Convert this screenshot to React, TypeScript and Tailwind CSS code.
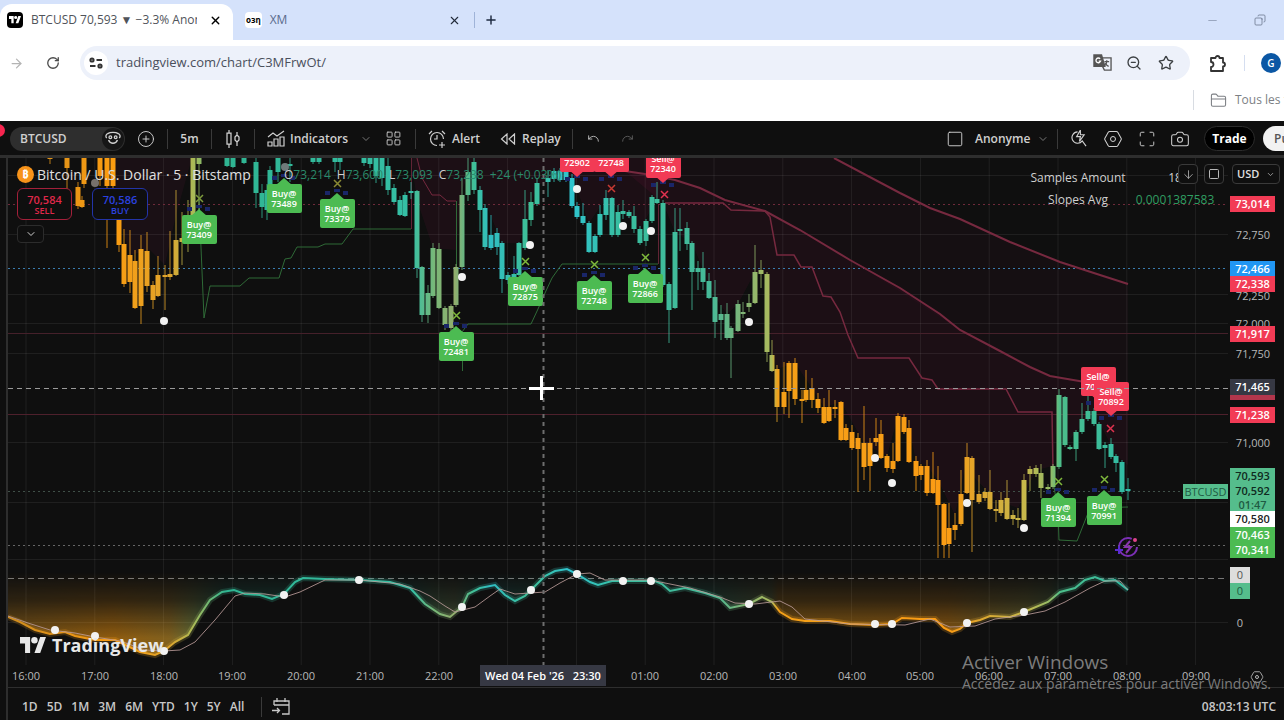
import type { ReactNode } from "react";
import {
  ArrowDown,
  ArrowRight,
  Camera,
  ChevronDown,
  CirclePlus,
  Copy,
  FolderClosed,
  Hexagon,
  LayoutGrid,
  Maximize,
  Minus,
  Plus,
  Redo,
  RotateCw,
  Square,
  Star,
  Undo,
  X,
  ZoomOut,
} from "lucide-react";

// The plot keeps window coordinates: its origin is the pane's top left corner
const ORIGIN_X = 8;
const ORIGIN_Y = 158;
const HOUR_WIDTH = 68.8;
const FIRST_HOUR_X = 26;

// x, high, body top, body bottom, low
type Candle = [number, number, number, number, number];

const candles: Candle[] = [
  [50, 158, 158, 159, 164], [67, 158, 158, 168, 192], [78, 182, 187, 206, 209], [82, 196, 200, 207, 208],
  [84, 158, 158, 184, 188], [100, 158, 158, 176, 186], [107, 158, 158, 186, 248], [113, 158, 158, 186, 190],
  [119, 215, 218, 245, 252], [124, 229, 244, 284, 287], [130, 230, 255, 282, 293], [135, 250, 261, 308, 309],
  [141, 235, 249, 306, 324], [147, 232, 251, 286, 292], [153, 281, 285, 300, 309], [158, 256, 275, 296, 297],
  [165, 265, 275, 277, 310], [170, 231, 274, 277, 280], [176, 190, 240, 275, 276], [182, 212, 238, 242, 265],
  [188, 200, 216, 228, 252], [193, 158, 158, 228, 240], [199, 158, 158, 164, 212], [227, 158, 158, 166, 167],
  [233, 158, 158, 167, 168], [244, 158, 158, 163, 164], [256, 158, 162, 193, 208], [262, 184, 193, 207, 218],
  [267, 184, 190, 210, 220], [270, 166, 170, 186, 190], [278, 158, 158, 172, 182], [290, 158, 164, 166, 182],
  [313, 158, 158, 162, 164], [319, 158, 158, 162, 164], [335, 158, 158, 162, 172], [340, 158, 158, 162, 170],
  [364, 158, 158, 163, 166], [370, 158, 158, 164, 168], [376, 158, 158, 176, 183], [382, 158, 158, 178, 186],
  [388, 158, 166, 190, 195], [394, 184, 188, 202, 204], [400, 196, 200, 215, 216], [405, 192, 195, 216, 217],
  [411, 182, 191, 193, 199], [417, 190, 191, 268, 278], [422, 266, 267, 315, 322], [428, 285, 293, 315, 323],
  [433, 243, 248, 296, 298], [439, 243, 249, 308, 309], [445, 306, 308, 325, 330], [451, 304, 306, 328, 332],
  [456, 264, 267, 305, 307], [462, 178, 195, 267, 270], [468, 158, 172, 195, 201], [474, 158, 162, 190, 194],
  [480, 186, 190, 210, 232], [485, 204, 208, 247, 250], [491, 215, 235, 248, 250], [497, 228, 233, 247, 255],
  [502, 241, 243, 279, 293], [508, 272, 275, 280, 284], [514, 256, 274, 281, 282], [519, 242, 243, 275, 276],
  [525, 190, 219, 248, 250], [531, 192, 202, 220, 226], [537, 178, 183, 204, 206], [548, 170, 178, 182, 197],
  [554, 168, 171, 179, 182], [560, 168, 171, 180, 182], [566, 168, 171, 180, 182], [572, 174, 178, 206, 208],
  [577, 202, 206, 217, 219], [583, 203, 216, 223, 225], [589, 221, 223, 252, 253], [595, 234, 236, 252, 253],
  [600, 205, 214, 235, 237], [606, 190, 198, 215, 220], [612, 197, 198, 235, 237], [618, 205, 212, 235, 237],
  [623, 200, 211, 214, 219], [629, 210, 212, 216, 218], [634, 206, 216, 229, 233], [640, 226, 229, 243, 245],
  [646, 219, 221, 241, 246], [652, 195, 197, 221, 223], [657, 182, 199, 203, 204], [663, 200, 203, 285, 287],
  [669, 282, 284, 310, 343], [675, 208, 232, 308, 309], [680, 208, 229, 231, 251], [687, 222, 228, 244, 250],
  [692, 241, 243, 272, 310], [698, 261, 268, 272, 290], [703, 252, 268, 282, 290], [709, 273, 281, 298, 299],
  [715, 280, 297, 322, 338], [721, 305, 314, 320, 340], [727, 303, 314, 338, 340], [731, 326, 328, 338, 378],
  [738, 300, 304, 331, 332], [743, 302, 312, 314, 318], [749, 294, 303, 307, 312], [755, 245, 272, 303, 304],
  [761, 260, 270, 274, 288], [767, 272, 274, 352, 362], [772, 340, 355, 371, 372], [777, 365, 369, 407, 422],
  [784, 362, 392, 407, 414], [789, 361, 363, 391, 418], [795, 358, 363, 399, 405], [802, 390, 399, 401, 423],
  [806, 370, 390, 400, 402], [812, 378, 388, 400, 408], [818, 393, 399, 408, 413], [824, 398, 407, 423, 424],
  [829, 390, 407, 421, 422], [835, 400, 407, 409, 418], [841, 401, 402, 440, 441], [846, 424, 428, 440, 441],
  [852, 425, 432, 448, 450], [858, 433, 438, 449, 492], [864, 406, 443, 467, 480], [870, 438, 443, 466, 491],
  [876, 418, 438, 442, 446], [881, 420, 434, 458, 459], [887, 454, 456, 468, 472], [893, 443, 461, 469, 473],
  [898, 413, 416, 461, 462], [904, 414, 417, 432, 434], [909, 420, 428, 462, 463], [916, 456, 461, 476, 491],
  [921, 464, 466, 475, 480], [927, 460, 466, 493, 496], [933, 452, 479, 493, 494], [938, 466, 480, 505, 558],
  [944, 503, 504, 545, 558], [949, 503, 528, 544, 558], [955, 513, 525, 530, 540], [961, 470, 494, 524, 526],
  [967, 443, 457, 493, 494], [972, 456, 458, 500, 552], [979, 475, 494, 502, 504], [985, 488, 492, 498, 501],
  [990, 470, 492, 509, 510], [996, 500, 509, 511, 522], [1001, 492, 500, 513, 516], [1007, 480, 498, 519, 520],
  [1013, 510, 515, 519, 525], [1018, 508, 518, 520, 528], [1024, 474, 480, 520, 521], [1030, 466, 469, 474, 491],
  [1036, 465, 468, 474, 477], [1041, 464, 473, 488, 498], [1048, 484, 487, 489, 492], [1053, 464, 466, 487, 489],
  [1059, 389, 395, 467, 469], [1065, 396, 397, 445, 447], [1070, 445, 447, 449, 450], [1076, 430, 432, 449, 461],
  [1082, 403, 419, 432, 434], [1088, 396, 411, 419, 421], [1094, 408, 411, 424, 426], [1099, 422, 424, 449, 450],
  [1105, 442, 445, 448, 468], [1111, 438, 444, 457, 459], [1116, 454, 456, 463, 472], [1122, 460, 462, 492, 494],
  [1128, 478, 489, 491, 500],
];

const slopeLine =
  "8,617 20,622 35,630 50,634 65,632 75,636 95,640 115,640 140,652 155,655 164,651 175,642 188,635 200,615 210,600 222,592 234,590 245,594 260,595 272,599 284,594 295,582 303,578 325,579 360,580 390,582 410,588 425,604 440,614 450,617 462,607 468,594 480,588 495,585 505,595 515,601 525,596 531,590 545,576 555,571 567,569 577,574 590,582 598,585 612,581 640,581 655,581 662,584 670,591 685,588 705,593 720,598 730,608 749,604 762,597 772,602 780,612 792,619 805,621 830,621 850,624 875,625 892,624 902,618 920,619 935,619 944,628 952,632 960,629 967,623 980,620 990,616 1010,617 1024,612 1048,602 1060,592 1075,588 1085,580 1095,577 1105,581 1115,580 1128,590";

const signalLine =
  "8,616 28,623 50,630 75,633 95,637 120,641 145,650 164,651 180,650 195,642 215,620 235,596 245,593 265,594 285,597 300,592 325,580 360,580 400,584 420,591 430,596 445,606 455,612 475,607 490,596 500,589 515,594 530,593 545,592 560,583 577,574 590,573 605,580 650,580 690,588 720,597 735,603 755,604 780,601 792,607 805,619 850,624 905,625 930,619 950,627 975,626 995,619 1025,615 1045,611 1065,602 1090,588 1105,581 1120,581 1128,590";

const fastAverage =
  "625,171 645,174 675,180 700,188 725,200 765,211 800,230 850,260 900,288 940,314 960,330 1000,351 1030,367 1050,376 1085,382";
const slowAverage = "834,158 900,193 930,208 960,219 1010,242 1060,262 1100,275 1128,284";
const stopLine =
  "665,203 723,203 731,210 765,211 770,217 777,255 794,255 801,267 812,267 823,296 831,297 840,312 848,335 858,358 909,358 922,378 932,380 938,389 1006,389 1018,412 1052,412 1053,470";

const buySignals = [
  { x: 199, y: 215, price: "73409" },
  { x: 284, y: 184, price: "73489" },
  { x: 337, y: 199, price: "73379" },
  { x: 456, y: 332, price: "72481" },
  { x: 525, y: 277, price: "72875" },
  { x: 594, y: 281, price: "72748" },
  { x: 645, y: 274, price: "72866" },
  { x: 1058, y: 498, price: "71394" },
  { x: 1104, y: 496, price: "70991" },
];

const sellSignals = [
  { x: 577, y: 143, price: "72902" },
  { x: 611, y: 143, price: "72748" },
  { x: 663, y: 149, price: "72340" },
  { x: 1098, y: 367, price: "70984" },
  { x: 1111, y: 382, price: "70892" },
];

const crosses = [
  { x: 199, y: 198, color: "#7d9a3c" },
  { x: 337, y: 183, color: "#8a8a34" },
  { x: 456, y: 315, color: "#7fb83c" },
  { x: 525, y: 261, color: "#7fb83c" },
  { x: 594, y: 264, color: "#7fb83c" },
  { x: 645, y: 257, color: "#7fb83c" },
  { x: 1058, y: 481, color: "#7fb83c" },
  { x: 1104, y: 479, color: "#7fb83c" },
  { x: 611, y: 188, color: "#c93a33" },
  { x: 664, y: 194, color: "#e0324f" },
  { x: 1110, y: 428, color: "#e0324f" },
];

const dots = [
  [164, 321], [462, 277], [530, 245], [577, 189], [623, 226], [651, 231], [749, 322], [875, 458], [892, 483],
  [967, 503], [1024, 528], [55, 630], [95, 636], [164, 651], [284, 595], [359, 580], [462, 607], [531, 590],
  [577, 574], [623, 581], [651, 581], [749, 604], [875, 624], [892, 624], [967, 623], [1024, 612],
];

const hours = ["16:00", "17:00", "18:00", "19:00", "20:00", "21:00", "22:00", "23:00", "00:00", "01:00", "02:00", "03:00", "04:00", "05:00", "06:00", "07:00", "08:00", "09:00"];

// Labels under the crosshair date are dropped
const coveredHours = ["23:00", "00:00"];

const ticks = [
  { y: 234, label: "72,750" },
  { y: 264, label: "72,500" },
  { y: 295, label: "72,250" },
  { y: 323, label: "72,000" },
  { y: 353, label: "71,750" },
  { y: 442, label: "71,000" },
];

const tags = [
  { y: 204, label: "73,014", tone: "bg-[#f23b55] text-white" },
  { y: 269, label: "72,466", tone: "bg-[#2196f3] text-white" },
  { y: 284, label: "72,338", tone: "bg-[#f23b55] text-white" },
  { y: 334, label: "71,917", tone: "bg-[#f23b55] text-white" },
  { y: 392, label: "", tone: "bg-[#b2364c]" },
  { y: 387, label: "71,465", tone: "bg-[#363843] text-white" },
  { y: 415, label: "71,238", tone: "bg-[#f23b55] text-white" },
  { y: 476, label: "70,593", tone: "bg-[#55bd8c] text-[#0f2a20]" },
  { y: 491, label: "70,592", tone: "bg-[#55bd8c] text-[#0f2a20]" },
  { y: 505, label: "01:47", tone: "bg-[#55bd8c] text-[#1f5a43]" },
  { y: 519, label: "70,580", tone: "bg-white text-[#222222]" },
  { y: 535, label: "70,463", tone: "bg-[#4cbb52] text-white" },
  { y: 550, label: "70,341", tone: "bg-[#4cbb52] text-white" },
];

const ranges = ["1D", "5D", "1M", "3M", "6M", "YTD", "1Y", "5Y", "All"];

function Signal({ x, y, price, side }: { x: number; y: number; price: string; side: "buy" | "sell" }) {
  const buy = side === "buy";
  const fill = buy ? "#4cbb52" : "#f23b55";
  const tip = buy ? y - 8 : y + 34;
  return (
    <g>
      <path d={`M${x - 12} ${tip}h5v4h-5zM${x + 6} ${tip}h5v4h-5zM${x - 3} ${tip - 2}h6v3h-6z`} fill="#1a2668" />
      <path
        d={buy ? `M${x - 8} ${y + 1}L${x} ${y - 6}L${x + 8} ${y + 1}z` : `M${x - 8} ${y + 27}L${x} ${y + 34}L${x + 8} ${y + 27}z`}
        fill={fill}
      />
      <rect x={x - 17} y={y} width="35" height="29" rx="2" fill={fill} />
      <text x={x} y={y + 13} textAnchor="middle" fontSize="9" fontWeight="600" fill="#ffffff">
        {buy ? "Buy@" : "Sell@"}
      </text>
      <text x={x} y={y + 23} textAnchor="middle" fontSize="9" fontWeight="600" fill="#ffffff">
        {price}
      </text>
    </g>
  );
}

function TradingViewMark({ className }: { className: string }) {
  return (
    <svg viewBox="0 0 36 22" className={className} fill="currentColor" aria-hidden="true">
      <path d="M14 22H7V9H0V0h14zM28 22h-8L28 0h8z" />
      <circle cx="20" cy="4.5" r="4.5" />
    </svg>
  );
}

function Plot() {
  return (
    <svg className="absolute inset-0 h-full w-full font-['Open_Sans',sans-serif]" role="img" aria-label="BTCUSD price chart">
      <defs>
        <linearGradient id="trend" gradientUnits="userSpaceOnUse" x1="0" y1="0" x2="1128" y2="0">
          <stop offset="0" stopColor="#c98a20" />
          <stop offset="0.1" stopColor="#fb9c10" />
          <stop offset="0.15" stopColor="#e0a52c" />
          <stop offset="0.172" stopColor="#a8ba58" />
          <stop offset="0.2" stopColor="#2fb592" />
          <stop offset="0.365" stopColor="#35bfa5" />
          <stop offset="0.385" stopColor="#78b878" />
          <stop offset="0.403" stopColor="#92ad6c" />
          <stop offset="0.42" stopColor="#3fbf98" />
          <stop offset="0.435" stopColor="#2fbec4" />
          <stop offset="0.47" stopColor="#3fbf95" />
          <stop offset="0.505" stopColor="#2fc4cf" />
          <stop offset="0.55" stopColor="#38bfa0" />
          <stop offset="0.63" stopColor="#46ba98" />
          <stop offset="0.66" stopColor="#82b474" />
          <stop offset="0.684" stopColor="#adbb5c" />
          <stop offset="0.69" stopColor="#f4a018" />
          <stop offset="0.84" stopColor="#fb9c14" />
          <stop offset="0.875" stopColor="#d9a934" />
          <stop offset="0.91" stopColor="#c6b94c" />
          <stop offset="0.932" stopColor="#90bb68" />
          <stop offset="0.94" stopColor="#4cbd8a" />
          <stop offset="1" stopColor="#30bda6" />
        </linearGradient>
        <linearGradient id="fade" gradientUnits="userSpaceOnUse" x1="0" y1="572" x2="0" y2="655">
          <stop offset="0" stopColor="#ffffff" stopOpacity="0" />
          <stop offset="0.35" stopColor="#ffffff" stopOpacity="0.16" />
          <stop offset="0.8" stopColor="#ffffff" stopOpacity="0.55" />
        </linearGradient>
        <mask id="fadeMask" maskUnits="userSpaceOnUse" x="0" y="560" width="1140" height="110">
          <rect x="0" y="560" width="1140" height="110" fill="url(#fade)" />
        </mask>
      </defs>

      <g transform={`translate(${-ORIGIN_X} ${-ORIGIN_Y})`}>
        {/* Trend shading */}
        <g fill="#d02070">
          <polygon points="112,158 119,218 130,255 150,250 165,265 176,215 192,158" fillOpacity="0.06" />
          <polygon points="411,158 417,200 433,248 456,250 462,190 474,160 480,190 502,243 519,243 537,185 572,175 589,223 606,198 640,229 657,199 663,158" fillOpacity="0.07" />
          <polygon
            points={`${fastAverage} 1128,385 1128,465 1116,455 1094,412 1082,425 1065,445 1059,395 1053,466 1036,470 1018,508 996,500 972,475 967,457 955,515 938,480 927,466 916,461 909,428 898,416 887,456 864,443 841,402 824,407 812,388 795,363 777,369 772,350 767,274 755,272 738,304 727,314 715,297 692,243 675,232 663,203`}
            fillOpacity="0.07"
          />
          <polygon points={`663,158 ${slowAverage} 1128,385 1085,382 1030,367 960,330 850,260 765,211 675,180`} fillOpacity="0.03" />
        </g>

        {/* Grid */}
        <g stroke="#ffffff" strokeOpacity="0.07">
          {hours.map((hour, i) => (
            <line key={hour} x1={FIRST_HOUR_X + i * HOUR_WIDTH} x2={FIRST_HOUR_X + i * HOUR_WIDTH} y1="158" y2="665" />
          ))}
          {[175, 234, 294, 323, 353, 442, 502, 559, 622].map((y) => (
            <line key={y} x1="8" x2="1228" y1={y + 0.5} y2={y + 0.5} />
          ))}
        </g>

        {/* Levels */}
        <line x1="8" x2="1228" y1="204.5" y2="204.5" stroke="#6e2a3a" strokeDasharray="2 3" />
        <line x1="8" x2="1228" y1="268.5" y2="268.5" stroke="#3a7cae" strokeDasharray="2 3" />
        <line x1="8" x2="1228" y1="333.5" y2="333.5" stroke="#45202a" />
        <line x1="8" x2="1228" y1="414.5" y2="414.5" stroke="#4e202c" />
        <line x1="8" x2="1228" y1="491.5" y2="491.5" stroke="#405048" strokeDasharray="2 3" />
        <line x1="8" x2="1228" y1="545.5" y2="545.5" stroke="#666666" strokeDasharray="2 3" />
        <line x1="8" x2="1228" y1="578.5" y2="578.5" stroke="#777777" strokeDasharray="6 4" />

        {/* Averages and stops */}
        <g fill="none" strokeWidth="2" stroke="#76293f">
          <polyline points={fastAverage} />
          <polyline points={slowAverage} />
          <polyline points={stopLine} strokeWidth="1.5" />
          <polyline points="417,158 422,178 432,195 440,195 447,201 456,201" strokeWidth="1" />
          <path d="M411.5 158V229M658.5 205V264" strokeWidth="1" strokeOpacity="0.8" />
        </g>
        <g fill="none" stroke="#2f6a37">
          <polyline points="199,200 204,318 210,286 240,286 249,278 279,278 285,259 291,258 297,247 318,247 325,244 342,244 353,229 411,229" />
          <polyline points="456,345 462,332 468,324 531,324 538,309 545,293 552,278 562,264 658,264" />
          <polyline points="1053,480 1058,512 1059,540 1077,541 1090,508 1128,507" />
          <path d="M456.5 201V267M462.5 332V371" />
        </g>

        {/* Candles */}
        <g fill="url(#trend)">
          {candles.map(([x, high, top, bottom, low]) => (
            <g key={x}>
              <rect x={x - 0.5} y={high} width="1" height={low - high} fillOpacity="0.8" />
              <rect x={x - 2.5} y={top} width="5" height={bottom - top} />
            </g>
          ))}
        </g>

        {/* Slope oscillator */}
        <polygon points={`8,572 ${slopeLine} 1128,572`} fill="url(#trend)" mask="url(#fadeMask)" />
        <polyline points={slopeLine} fill="none" stroke="url(#trend)" strokeWidth="6" strokeOpacity="0.22" />
        <polyline points={slopeLine} fill="none" stroke="url(#trend)" strokeWidth="2" />
        <polyline points={signalLine} fill="none" stroke="#b99a98" strokeOpacity="0.85" />

        {/* Signals */}
        {sellSignals.map((s) => (
          <Signal key={s.x} {...s} side="sell" />
        ))}
        {buySignals.map((s) => (
          <Signal key={s.x} {...s} side="buy" />
        ))}
        {crosses.map(({ x, y, color }) => (
          <path key={x} d={`M${x - 3} ${y - 3}l7 7m0-7l-7 7`} stroke={color} strokeWidth="1.5" />
        ))}
        {dots.map(([x, y]) => (
          <circle key={`${x}-${y}`} cx={x} cy={y} r="4" fill="#f2f2f2" />
        ))}
        <circle cx="95" cy="183" r="4" fill="#77716c" />
        <circle cx="285" cy="167" r="4" fill="#6f7a7a" />

        {/* News flash */}
        <g fill="none" stroke="#7b2fb5" strokeWidth="2">
          <circle cx="1128" cy="547" r="9" strokeDasharray="46 11" />
          <path d="M1130 541l-5 6h6l-5 6" stroke="#8a35b0" />
          <path d="M1119 546v8M1115 550h8" stroke="#5b2bd0" />
          <circle cx="1135" cy="540" r="1" stroke="#e0448c" />
        </g>

        {/* Crosshair */}
        <line x1="8" x2="1228" y1="388.5" y2="388.5" stroke="#9a9a9a" strokeDasharray="5 4" />
        <line x1="543.5" x2="543.5" y1="158" y2="665" stroke="#6e6e6e" strokeWidth="2" strokeDasharray="4 4" />
        <path d="M541.5 376v24M529 388.5h25" stroke="#ffffff" strokeWidth="3" />
      </g>
    </svg>
  );
}

function Divider() {
  return <span className="h-5 w-px shrink-0 bg-[#3a3a3a]" />;
}

function IconButton({ label, className, children }: { label: string; className: string; children: ReactNode }) {
  return (
    <button type="button" aria-label={label} className={`flex shrink-0 items-center justify-center ${className}`}>
      {children}
    </button>
  );
}

function Browser() {
  return (
    <header className="shrink-0 overflow-hidden bg-white text-[#3c4043]">
      <div className="flex h-10 items-center bg-[#d5e2fb]">
        <div className="flex h-full w-[233px] shrink-0 items-end">
          <div className="flex h-9 w-full items-center rounded-t-xl bg-white pb-1 pl-[7px] pr-[10px]">
            <span className="flex size-4 shrink-0 items-center justify-center rounded bg-black text-white">
              <TradingViewMark className="w-3" />
            </span>
            <span className="ml-2 w-[166px] overflow-hidden whitespace-nowrap text-xs text-[#50535a]">
              BTCUSD 70,593 ▼ −3.3% Anonyme
            </span>
            <IconButton label="Close tab" className="ml-auto size-4 text-black">
              <X size={13} strokeWidth={2.5} />
            </IconButton>
          </div>
        </div>
        <div className="flex w-[241px] shrink-0 items-center pl-3 pr-3">
          <span className="rounded-sm bg-white px-px text-[8px] font-bold leading-4 text-black">οɜη</span>
          <span className="ml-2 text-xs text-[#5a6b8c]">XM</span>
          <IconButton label="Close tab" className="ml-auto size-4 text-[#222b3a]">
            <X size={13} strokeWidth={2} />
          </IconButton>
        </div>
        <span className="h-4 w-px bg-[#9fb3d8]" />
        <IconButton label="New tab" className="ml-2 size-4 text-[#1d2a40]">
          <Plus size={14} strokeWidth={2.5} />
        </IconButton>
        <div className="ml-auto flex items-center gap-8 pr-4">
          <IconButton label="Minimize" className="size-4 text-[#9aa7c0]">
            <Minus size={13} />
          </IconButton>
          <IconButton label="Restore" className="size-4 text-[#65718a]">
            <Copy size={12} strokeWidth={1.5} className="rotate-90" />
          </IconButton>
        </div>
      </div>

      <div className="flex h-[46px] items-center">
        <IconButton label="Forward" className="w-8 text-[#b4b4b4]">
          <ArrowRight size={15} />
        </IconButton>
        <IconButton label="Reload" className="ml-[11px] w-5 text-[#4a4a4a]">
          <RotateCw size={14} strokeWidth={2.25} />
        </IconButton>
        <div className="ml-[17px] flex h-[34px] min-w-0 flex-1 items-center rounded-full bg-[#edf1fa] px-1">
          <IconButton label="Site information" className="size-6 rounded-full bg-white text-[#333333]">
            <svg viewBox="0 0 14 12" className="w-3.5" fill="none" stroke="currentColor" strokeWidth="2">
              <circle cx="3" cy="3" r="1.6" />
              <path d="M7.500 3H13M1 9h5.500" />
              <circle cx="11" cy="9" r="1.600" />
            </svg>
          </IconButton>
          <input
            type="text"
            aria-label="Address"
            defaultValue="tradingview.com/chart/C3MFrwOt/"
            className="ml-2 min-w-0 flex-1 bg-transparent text-[13px] text-[#4a4f5c] outline-none"
          />
          <IconButton label="Translate" className="w-8">
            <svg viewBox="0 0 20 18" className="w-[19px]" fill="none" stroke="#555555" strokeWidth="1.4">
              <path d="M1 1h8l3.500 12H1z" fill="#555555" />
              <path d="M9 4h10v13h-7l-2-4" />
              <path d="M12 8h5M14.500 6.500V8c0 3-1.500 4-3 5M13 9.500c1 2 2 3 3.500 3.500" />
              <path d="M7.500 5A2.500 2.500 0 1 0 8 7.500H6" stroke="#ffffff" />
            </svg>
          </IconButton>
          <IconButton label="Zoom" className="w-8">
            <ZoomOut size={16} />
          </IconButton>
          <IconButton label="Bookmark" className="mr-1 w-8">
            <Star size={16} />
          </IconButton>
        </div>
        <IconButton label="Extensions" className="ml-4 w-6 text-[#333333]">
          <svg viewBox="0 0 18 18" className="w-[18px]" fill="none" stroke="currentColor" strokeWidth="1.8" strokeLinejoin="round">
            <path d="M2 4h4.500a2 2 0 0 1 4 0H14v4.500a2 2 0 0 1 0 4V17H2v-4a2.500 2.500 0 0 0 0-5z" />
          </svg>
        </IconButton>
        <span className="ml-[14px] h-4 w-px bg-[#d5def0]" />
        <button type="button" className="ml-4 mr-[3px] size-5 shrink-0 rounded-full bg-[#0b57a4] text-[10px] font-semibold text-white">
          G
        </button>
      </div>

      <div className="flex h-[35px] items-start justify-end pt-1">
        <span className="h-5 w-px bg-[#d8dce2]" />
        <a href="#" className="ml-4 flex h-5 w-[74px] items-center gap-2 overflow-hidden whitespace-nowrap text-xs text-[#7c7f84]">
          <FolderClosed size={17} strokeWidth={1.5} className="shrink-0" />
          Tous les favoris
        </a>
      </div>
    </header>
  );
}

function Toolbar() {
  return (
    <div className="relative flex h-[37px] shrink-0 items-center overflow-hidden border-b-[3px] border-[#2e2e2e] bg-[#0f0f0f] pl-[10px] pt-px text-xs font-semibold text-[#d0d0d0]">
      <span className="absolute -left-2 top-[3px] size-[13px] rounded-full bg-[#f7254f]" />
      <div className="flex h-6 w-[115px] shrink-0 items-center rounded-full bg-[#2e2e2e] pl-[10px]">
        <button type="button">BTCUSD</button>
        <IconButton label="Compare symbols" className="ml-auto mr-px size-[22px] rounded-full bg-[#161616]">
          <svg viewBox="0 0 18 16" className="w-4" fill="none" stroke="currentColor" strokeWidth="1.5">
            <path d="M2 8a3 3 0 0 1 1-5c3-2 9-2 12 0a3 3 0 0 1 1 5M4 10c2 5 8 5 10 0" />
            <circle cx="6" cy="7" r="1.500" />
            <circle cx="12" cy="7" r="1.500" />
          </svg>
        </IconButton>
      </div>
      <IconButton label="Add symbol" className="mx-[10px] w-[22px]">
        <CirclePlus size={18} strokeWidth={1.25} />
      </IconButton>
      <Divider />
      <button type="button" className="w-[43px] shrink-0">5m</button>
      <Divider />
      <IconButton label="Candles" className="w-[42px]">
        <svg viewBox="0 0 16 18" className="w-4" fill="none" stroke="currentColor" strokeWidth="1.25">
          <path d="M4 0v3M4 14v4M2 3h4v11H2zM12 2v3M12 12v4M10 7l2-2 2 2v3l-2 2-2-2z" />
        </svg>
      </IconButton>
      <Divider />
      <button type="button" className="ml-3 flex w-[82px] shrink-0 items-center gap-[5px]">
        <svg viewBox="0 0 18 17" className="w-[18px] shrink-0" fill="none" stroke="currentColor" strokeWidth="1.2">
          <path d="M1 7l5-4 4 3 7-5M1 16v-4h4v4zM7 16V9h4v7zM13 16V7h4v9z" />
        </svg>
        Indicators
      </button>
      <IconButton label="Favourite indicators" className="w-[34px] text-[#777777]">
        <ChevronDown size={12} />
      </IconButton>
      <IconButton label="Templates" className="w-5">
        <LayoutGrid size={17} strokeWidth={1.25} />
      </IconButton>
      <span className="w-3 shrink-0" />
      <Divider />
      <button type="button" className="ml-3 flex w-[54px] shrink-0 items-center gap-[6px]">
        <svg viewBox="0 0 18 18" className="w-[18px] shrink-0" fill="none" stroke="currentColor" strokeWidth="1.2">
          <path d="M1 4l3-3M14 1l3 3M9 5v4H6M15.500 9A6.500 6.500 0 1 0 9 15.500M11 15h6M14 12v6" />
        </svg>
        Alert
      </button>
      <button type="button" className="ml-[18px] flex w-[64px] shrink-0 items-center gap-[6px]">
        <svg viewBox="0 0 16 12" className="w-4 shrink-0" fill="none" stroke="currentColor" strokeWidth="1.2">
          <path d="M7 1v10L1.500 6zM14.500 1v10L9 6z" />
        </svg>
        Replay
      </button>
      <span className="w-2 shrink-0" />
      <Divider />
      <IconButton label="Undo" className="ml-2 w-6">
        <Undo size={13} strokeWidth={1.5} />
      </IconButton>
      <IconButton label="Redo" className="ml-[10px] w-6 text-[#666666]">
        <Redo size={13} strokeWidth={1.5} />
      </IconButton>

      <div className="ml-auto flex shrink-0 items-center">
        <IconButton label="Layout" className="w-5">
          <Square size={18} strokeWidth={1.25} />
        </IconButton>
        <button type="button" className="ml-[10px] w-[54px] text-left">Anonyme</button>
        <IconButton label="Manage layouts" className="w-7 text-[#777777]">
          <ChevronDown size={12} />
        </IconButton>
        <Divider />
        <IconButton label="Quick search" className="ml-2 w-6">
          <svg viewBox="0 0 18 18" className="w-[17px]" fill="none" stroke="currentColor" strokeWidth="1.2">
            <path d="M8 2a6 6 0 1 0 5 9.500l4 5.500M11 0L7 7h4l-1 5 5-7h-4z" />
          </svg>
        </IconButton>
        <IconButton label="Settings" className="ml-[11px] w-6">
          <span className="relative flex items-center justify-center">
            <Hexagon size={20} strokeWidth={1.25} className="rotate-90" />
            <span className="absolute size-1.5 rounded-full border border-[#d0d0d0]" />
          </span>
        </IconButton>
        <IconButton label="Fullscreen" className="ml-[10px] w-6">
          <Maximize size={18} strokeWidth={1.25} />
        </IconButton>
        <IconButton label="Snapshot" className="ml-[9px] w-6">
          <Camera size={20} strokeWidth={1.25} />
        </IconButton>
        <button type="button" className="ml-3 h-[25px] w-[51px] rounded-full border border-[#2c2c2c] bg-black font-bold text-white">
          Trade
        </button>
        <button type="button" className="ml-2 h-[25px] w-[21px] overflow-hidden rounded-l-full bg-[#f2f2f2] pl-[11px] text-left text-[#555555]">
          Publish
        </button>
      </div>
    </div>
  );
}

function Legend() {
  return (
    <div className="absolute left-[9px] top-[7px]">
      <div className="flex h-[19px] items-center whitespace-nowrap">
        <span className="flex size-[17px] items-center justify-center rounded-full bg-[#f7931a] text-[11px] font-bold text-white">₿</span>
        <span className="ml-[3px] w-[247px] text-sm font-medium text-[#e0e0e0]">Bitcoin / U.S. Dollar · 5 · Bitstamp</span>
        <span className="flex gap-[6px] text-xs text-[#2a8a6b]">
          {[["O", "73,214"], ["H", "73,600"], ["L", "73,093"], ["C", "73,238"]].map(([key, value]) => (
            <span key={key}>
              <span className="text-[#d0d0d0]">{key}</span>
              {value}
            </span>
          ))}
          <span>+24 (+0.03%)</span>
        </span>
      </div>
      <div className="mt-1 flex gap-5 text-[11px] font-semibold leading-[13px]">
        <button type="button" className="h-8 w-[55px] rounded-md border border-[#a3203a] bg-[#0f0f0f] text-[#e0284a]">
          70,584
          <span className="block text-[9px] leading-[9px]">SELL</span>
        </button>
        <button type="button" className="h-8 w-[56px] rounded-md border border-[#2334a8] bg-[#0f0f0f] text-[#2b42e0]">
          70,586
          <span className="block text-[9px] leading-[9px]">BUY</span>
        </button>
      </div>
      <IconButton label="Collapse legend" className="mt-[5px] h-[18px] w-[27px] rounded border border-[#2c2c2c] bg-[#0f0f0f] text-[#d0d0d0]">
        <ChevronDown size={12} />
      </IconButton>
    </div>
  );
}

function SlopeStats() {
  return (
    <table className="absolute right-2 top-[9px] text-xs text-[#d0d0d0]">
      <tbody>
        <tr className="h-[22px]">
          <th className="w-[104px] text-center font-medium">Samples Amount</th>
          <td className="w-[90px] text-center">18</td>
        </tr>
        <tr className="h-[22px]">
          <th className="text-center font-medium">Slopes Avg</th>
          <td className="text-center text-[#2f9e62]">0.0001387583</td>
        </tr>
      </tbody>
    </table>
  );
}

function PriceAxis() {
  return (
    <div className="relative w-14 shrink-0 text-[11px]">
      {ticks.map(({ y, label }) => (
        <span key={label} className="absolute left-0 w-[50px] -translate-y-1/2 text-center leading-[15px] text-[#b8b8b8]" style={{ top: y - ORIGIN_Y }}>
          {label}
        </span>
      ))}
      {tags.map(({ y, label, tone }) => (
        <span
          key={y}
          className={`absolute left-[2px] h-4 w-[45px] -translate-y-1/2 text-center font-semibold leading-4 ${tone}`}
          style={{ top: y - ORIGIN_Y }}
        >
          {label}
        </span>
      ))}
      <span className="absolute right-full top-[326px] h-[15px] w-[45px] bg-[#55bd8c] text-center text-[11px] leading-[15px] text-[#1f5a43]">
        BTCUSD
      </span>
      <div className="absolute left-[2px] top-[409px] w-5 text-center leading-4">
        <div className="bg-[#dddddd] text-[#555555]">0</div>
        <div className="bg-[#55bd8c] text-[#1f5a43]">0</div>
        <div className="mt-4 text-[#b8b8b8]">0</div>
      </div>
      <div className="absolute left-1 top-[6px] flex h-5 w-12 items-center rounded border border-[#3a3a3a] bg-[#0f0f0f] pl-1">
        <select aria-label="Currency" className="w-full appearance-none bg-transparent text-[11px] font-semibold text-[#e0e0e0] outline-none">
          <option>USD</option>
        </select>
        <ChevronDown size={9} className="pointer-events-none absolute right-1 text-[#b8b8b8]" />
      </div>
    </div>
  );
}

function TimeAxis() {
  return (
    <div className="relative h-[23px] shrink-0 overflow-hidden border-b border-[#2e2e2e] text-[11px] text-[#b8b8b8]">
      {hours.map((hour, i) =>
        coveredHours.includes(hour) ? null : (
          <span
            key={hour}
            className="absolute top-[3px] -translate-x-1/2 leading-4"
            style={{ left: Math.round(FIRST_HOUR_X - ORIGIN_X + i * HOUR_WIDTH) }}
          >
            {hour}
          </span>
        ),
      )}
      <span className="absolute left-[472px] top-0 h-[21px] w-[126px] whitespace-pre bg-[#363843] text-center font-semibold leading-[22px] text-white">
        {"Wed 04 Feb '26   23:30"}
      </span>
      <button type="button" aria-label="Axis settings" className="absolute right-5 top-[5px]">
        <Hexagon size={14} strokeWidth={1.5} className="rotate-90" />
        <span className="absolute left-[5px] top-[5px] size-1 rounded-full border border-[#b8b8b8]" />
      </button>
    </div>
  );
}

export default function App() {
  return (
    <div className="relative flex min-h-screen flex-col overflow-hidden bg-[#0f0f0f] font-['Open_Sans','Noto_Sans',sans-serif]">
      <Browser />
      <Toolbar />

      <main className="flex min-h-0 flex-1">
        <aside className="w-2 shrink-0 border-r-2 border-[#2e2e2e]" />
        <div className="flex min-w-0 flex-1 flex-col">
          <div className="flex min-h-[480px] flex-1">
            <section className="relative min-w-0 flex-1 overflow-hidden">
              <Plot />
              <Legend />
              <SlopeStats />
              <div className="absolute right-1 top-[6px] flex gap-[6px] text-[#b8b8b8]">
                <IconButton label="Scroll down" className="size-5 rounded border border-[#3a3a3a] bg-[#0f0f0f]">
                  <ArrowDown size={13} strokeWidth={1.5} />
                </IconButton>
                <IconButton label="Maximize pane" className="size-5 rounded border border-[#3a3a3a] bg-[#0f0f0f]">
                  <Square size={12} strokeWidth={2} />
                </IconButton>
              </div>
              <div className="absolute bottom-2 left-3 flex items-center gap-[6px] text-[#e8e8e8]">
                <TradingViewMark className="w-[26px]" />
                <span className="text-lg font-bold leading-6">TradingView</span>
              </div>
            </section>
            <PriceAxis />
          </div>
          <TimeAxis />
          <footer className="flex h-8 shrink-0 items-center gap-px pl-[10px] pr-2 pt-[6px] text-xs font-semibold text-[#c8c8c8]">
            {ranges.map((range) => (
              <button key={range} type="button" className="px-1">
                {range}
              </button>
            ))}
            <span className="ml-3 h-5 w-px bg-[#3a3a3a]" />
            <IconButton label="Go to date" className="ml-2 w-5">
              <svg viewBox="0 0 18 18" className="w-[18px]" fill="none" stroke="currentColor" strokeWidth="1.3">
                <path d="M2 7V3h15v13h-7M2 7h15M5 0v4M13 0v4M0 12.500h7M5 10l2.500 2.500L5 15" />
              </svg>
            </IconButton>
            <span className="ml-auto">08:03:13 UTC</span>
          </footer>
        </div>
      </main>

      {/* Windows activation notice lies over the whole window */}
      <div className="pointer-events-none absolute bottom-[26px] right-2 w-[314px] whitespace-nowrap text-[#7c7c7c]">
        <p className="text-[19px] leading-6">Activer Windows</p>
        <p className="text-[14px] leading-5">Accédez aux paramètres pour activer Windows.</p>
      </div>
    </div>
  );
}
